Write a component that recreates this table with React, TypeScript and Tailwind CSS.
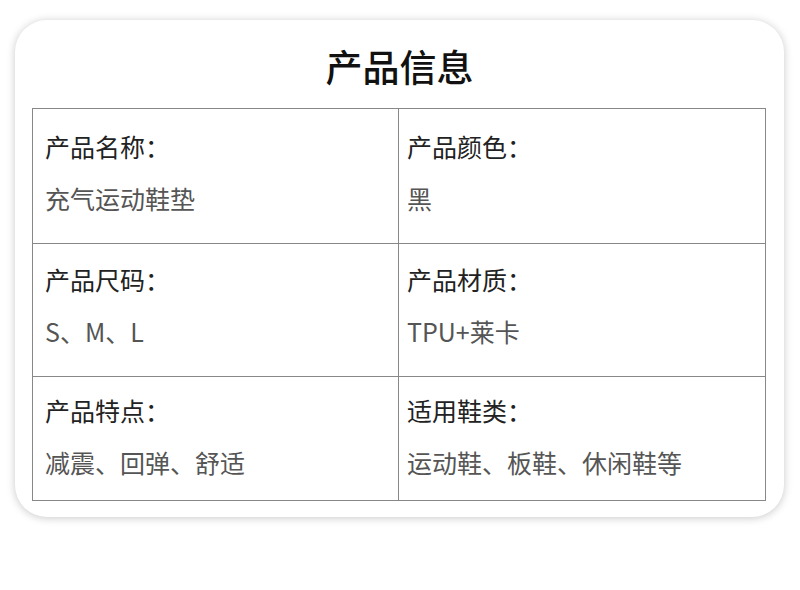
const rows = [
  [
    { label: "产品名称：", value: "充气运动鞋垫" },
    { label: "产品颜色：", value: "黑" },
  ],
  [
    { label: "产品尺码：", value: "S、M、L" },
    { label: "产品材质：", value: "TPU+莱卡" },
  ],
  [
    { label: "产品特点：", value: "减震、回弹、舒适" },
    { label: "适用鞋类：", value: "运动鞋、板鞋、休闲鞋等" },
  ],
];

const heights = ["h-[135px]", "h-[133px]", "h-[124px]"];
const tops = ["pt-[20px]", "pt-[18px]", "pt-[16px]"];

const App = () => {
  return (
    <div className="w-[800px] h-[590px] bg-white pt-[20px] pl-[15px] font-['Noto_Sans_CJK_SC','Noto_Sans',sans-serif]">
      <div className="w-[769px] h-[497px] bg-white rounded-[32px] shadow-[0_1px_8px_rgba(0,0,0,0.22)] px-[17px] flex flex-col">
        <div className="h-[88px] flex items-center justify-center pt-[4px]">
          <h1 className="text-[37px] font-medium text-[#111] leading-none">产品信息</h1>
        </div>
        <div className="border border-[#888] border-b-0 w-[734px]">
          {rows.map((row, i) => (
            <div key={i} className={`grid grid-cols-2 border-b border-[#888] ${heights[i]}`}>
              {row.map((cell, j) => (
                <div
                  key={j}
                  className={`${j === 0 ? "border-r border-[#888] pl-[12px]" : "pl-[8px]"} ${tops[i]} flex flex-col gap-[17px]`}
                >
                  <div className="text-[25px] leading-[35px] text-[#222]">{cell.label}</div>
                  <div className="text-[25px] leading-[35px] text-[#555]">{cell.value}</div>
                </div>
              ))}
            </div>
          ))}
        </div>
      </div>
    </div>
  );
};

export default App;
